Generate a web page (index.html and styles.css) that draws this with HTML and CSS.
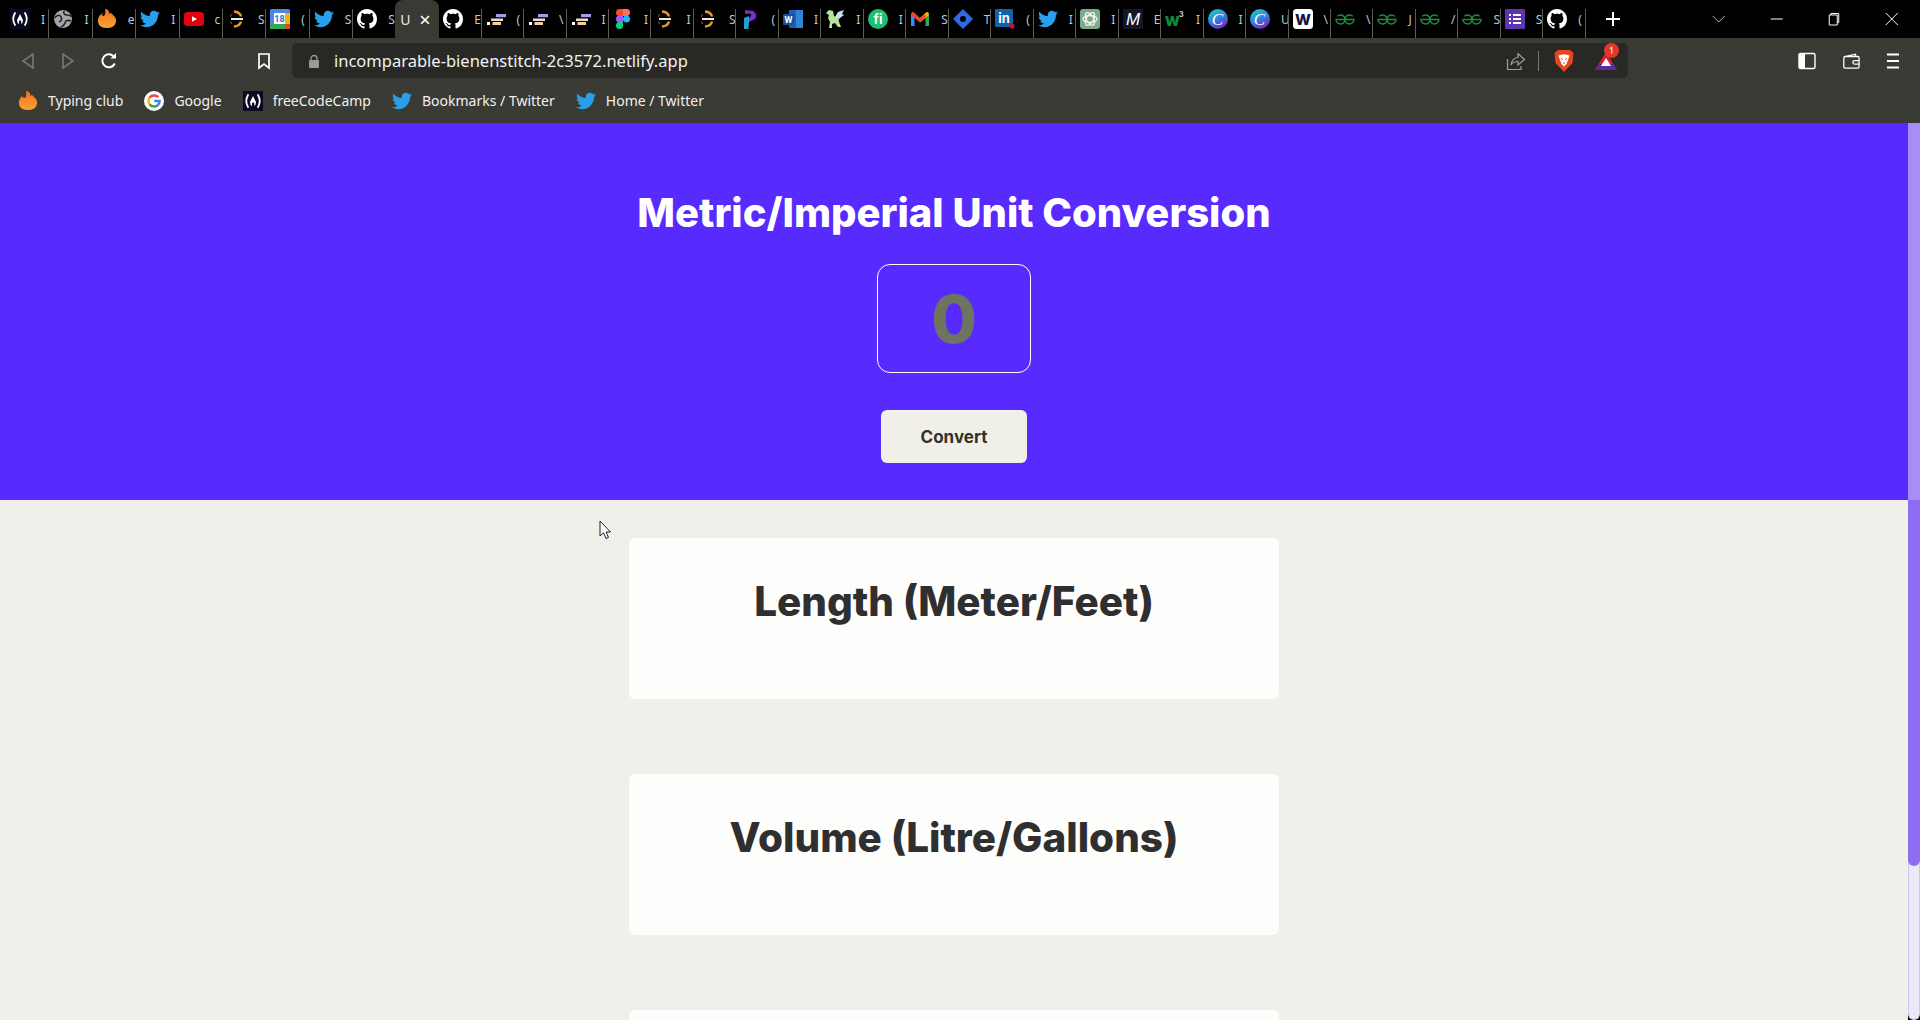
FILE: index.html
```html
<!DOCTYPE html>
<html lang="en">
<head>
    <meta charset="UTF-8">
    <meta name="viewport" content="width=device-width, initial-scale=1.0">
    <title>Metric/Imperial Unit Conversion</title>
    <link rel="stylesheet" href="styles.css">
</head>
<body>
    <svg class="defs" width="0" height="0">
        <defs>
            <linearGradient id="fireFill" x1="0" y1="0" x2="0" y2="1"><stop offset="0" stop-color="#f2701a"/><stop offset="1" stop-color="#f7a334"/></linearGradient>
            <linearGradient id="canvaFill" x1="0" y1="0" x2="0.500" y2="1"><stop offset="0" stop-color="#1fd0c8"/><stop offset="0.500" stop-color="#2f8fe0"/><stop offset="1" stop-color="#6a2fc8"/></linearGradient>
        </defs>
        <symbol id="fcc" viewBox="0 0 20 20">
            <rect width="20" height="20" fill="#0a0a23"/>
            <path d="M5 4Q1.500 10 5 16M15 4Q18.500 10 15 16" fill="none" stroke="#fff" stroke-width="1.800" stroke-linecap="round"/>
            <path d="M10 5Q12 9 13 11Q13 14 11 15Q12 12 10 11Q8.500 12 9 15Q7 14 7 11Q8 9 10 5Z" fill="#fff"/>
        </symbol>
        <symbol id="globe" viewBox="0 0 20 20">
            <circle cx="10" cy="10" r="9" fill="#a3a6a6"/>
            <path d="M1.500 9Q6 4 8 8Q10 11 6 13M11 2Q10 6 14 6Q18 6 18 8M18 12Q13 10 12 14Q11 17 8 18" fill="none" stroke="#222" stroke-width="1.600"/>
        </symbol>
        <symbol id="fire" viewBox="0 0 20 20">
            <path d="M7 7Q9 5 8 0Q12 0 12.500 5Q14 3 15 5Q20 9 19 13Q17.500 19 10 19Q2 19 1 13Q0.500 8 4 5Q5 7 7 7Z" fill="url(#fireFill)"/>
            <circle cx="5" cy="5" r="1.300" fill="#55382a"/>
        </symbol>
        <symbol id="twitter" viewBox="0 0 24 24">
            <path fill="#2a9fec" d="M23.954 4.569c-.885.389-1.830.654-2.825.775 1.014-.611 1.794-1.574 2.163-2.723-.951.555-2.005.959-3.127 1.184-.896-.959-2.173-1.559-3.591-1.559-2.717 0-4.920 2.203-4.920 4.917 0 .39.045.765.127 1.124C7.691 8.094 4.066 6.130 1.640 3.161c-.427.722-.666 1.561-.666 2.475 0 1.710.87 3.213 2.188 4.096-.807-.026-1.566-.248-2.228-.616v.061c0 2.385 1.693 4.374 3.946 4.827-.413.111-.849.171-1.296.171-.314 0-.615-.03-.916-.086.631 1.953 2.445 3.377 4.604 3.417-1.680 1.319-3.809 2.105-6.102 2.105-.39 0-.779-.023-1.170-.067 2.189 1.394 4.768 2.209 7.557 2.209 9.054 0 13.999-7.496 13.999-13.986 0-.209 0-.42-.015-.63.961-.689 1.800-1.560 2.460-2.548l-.047-.02z"/>
        </symbol>
        <symbol id="youtube" viewBox="0 0 20 20">
            <rect y="3" width="20" height="14" rx="3.500" fill="#e3000f"/>
            <path d="M8 7.200L13 10L8 12.800Z" fill="#fff"/>
        </symbol>
        <symbol id="spinner" viewBox="0 0 20 20">
            <path d="M7 2.500Q13 3 14 7.500M14 12.500Q13 17 7 17.500" fill="none" stroke="#e79a23" stroke-width="2.400"/>
            <path d="M5 5Q3.500 6 3.500 7.500M3.500 12.500Q3.500 14 5 15" fill="none" stroke="#6a4a10" stroke-width="1.400"/>
            <path d="M4 10H16" stroke="#e8e8e8" stroke-width="2"/>
        </symbol>
        <symbol id="github" viewBox="0 0 16 16">
            <path fill="#fff" d="M8 0C3.580 0 0 3.580 0 8c0 3.540 2.290 6.530 5.470 7.590.4.070.55-.17.55-.38 0-.19-.01-.82-.01-1.490-2.010.37-2.530-.49-2.690-.94-.09-.23-.48-.94-.82-1.130-.28-.15-.68-.52-.01-.53.63-.01 1.080.58 1.230.82.72 1.210 1.870.87 2.330.66.07-.52.28-.87.51-1.070-1.780-.2-3.640-.89-3.640-3.950 0-.87.31-1.590.82-2.150-.08-.2-.36-1.020.08-2.120 0 0 .67-.21 2.200.82.64-.18 1.320-.27 2-.27.68 0 1.360.09 2 .27 1.530-1.040 2.200-.82 2.200-.82.44 1.100.16 1.920.08 2.120.51.56.82 1.270.82 2.150 0 3.070-1.870 3.750-3.650 3.950.29.25.54.73.54 1.480 0 1.070-.01 1.930-.01 2.200 0 .21.15.46.55.38A8.013 8.013 0 0016 8c0-4.420-3.580-8-8-8z"/>
        </symbol>
        <symbol id="bars" viewBox="0 0 20 20">
            <rect x="10" y="5" width="10" height="3.200" fill="#a99ae6"/>
            <rect x="5" y="9.500" width="12" height="2.500" fill="#e5d9d2"/>
            <rect x="1" y="13" width="3" height="3" fill="#fff"/>
            <rect x="6.500" y="13" width="8.500" height="3" fill="#f3cfa8"/>
        </symbol>
        <symbol id="figma" viewBox="0 0 20 20">
            <path d="M3 3.500A3.500 3.500 0 016.500 0H10V7H6.500A3.500 3.500 0 013 3.500Z" fill="#f24e1e"/>
            <path d="M10 0H13.500A3.500 3.500 0 0113.500 7H10Z" fill="#ff7262"/>
            <path d="M3 10A3.500 3.500 0 016.500 6.500H10V13.500H6.500A3.500 3.500 0 013 10Z" fill="#a259ff"/>
            <circle cx="13.500" cy="10" r="3.500" fill="#1abcfe"/>
            <path d="M3 16.500A3.500 3.500 0 016.500 13H10V16.500A3.500 3.500 0 013 16.500Z" fill="#0acf83"/>
        </symbol>
        <symbol id="pfont" viewBox="0 0 20 20">
            <path d="M5 1L13 2Q18 5 15 10L9 13V9L11 7Q12 5 9 4.500L5 5Z" fill="#7a2fd8"/>
            <path d="M4 9L9 7V13L8.500 20H4Z" fill="#1f9fd8"/>
        </symbol>
        <symbol id="griffin" viewBox="0 0 20 20">
            <path d="M10 8L13 3L19 1L17 5L19 6L15 9L13 11Z" fill="#c6e2f0"/>
            <path d="M1 4L4 1L8 2L9 7L13 9L14 13L16 18H13L10 14L7 15L7 19H4L5 13L3 9L4 6Z" fill="#b5e59a"/>
        </symbol>
        <symbol id="gmail" viewBox="0 0 20 20">
            <path d="M1 5V17H4.500V8Z" fill="#4285f4"/>
            <path d="M19 5V17H15.500V8Z" fill="#34a853"/>
            <path d="M1 6Q1 2 4 3.500L10 9L10 13.500L1 6Z" fill="#ea4335"/>
            <path d="M19 6Q19 2 16 3.500L10 9L10 13.500L19 6Z" fill="#f6b704"/>
            <path d="M4.500 5L10 9.500L15.500 5V8L10 13L4.500 8Z" fill="#ea4335"/>
        </symbol>
        <symbol id="diamond" viewBox="0 0 20 20">
            <path d="M10 0.500L19.500 10L10 19.500L0.500 10Z" fill="#2d6be4" stroke="#2d6be4" stroke-width="1" stroke-linejoin="round"/>
            <circle cx="10" cy="10" r="3" fill="#000"/>
        </symbol>
        <symbol id="chatgpt" viewBox="0 0 20 20">
            <rect width="20" height="20" rx="3" fill="#79ab8e"/>
            <g fill="none" stroke="#f4f4ea" stroke-width="1.300">
                <ellipse cx="10" cy="10" rx="7" ry="3.500"/>
                <ellipse cx="10" cy="10" rx="7" ry="3.500" transform="rotate(60 10 10)"/>
                <ellipse cx="10" cy="10" rx="7" ry="3.500" transform="rotate(120 10 10)"/>
            </g>
        </symbol>
        <symbol id="gfg" viewBox="0 0 20 20">
            <path d="M10.500 10.500H19A4.500 4.500 0 1 1 17.700 7.300M9.500 10.500H1A4.500 4.500 0 1 0 2.300 7.300" fill="none" stroke="#1f8f3a" stroke-width="1.400"/>
        </symbol>
        <symbol id="forms" viewBox="0 0 20 20">
            <rect width="20" height="20" rx="1" fill="#5e35b1"/>
            <path d="M8 6H16M8 10H16M8 14H16M4 6H6M4 10H6M4 14H6" stroke="#fff" stroke-width="2"/>
        </symbol>
        <symbol id="google" viewBox="0 0 20 20">
            <circle cx="10" cy="10" r="10" fill="#fff"/>
            <g fill="none" stroke-width="2.500">
                <path d="M14.200 6.200A5.600 5.600 0 005.500 6.800" stroke="#ea4335"/>
                <path d="M5.500 6.800A5.600 5.600 0 005.500 13.200" stroke="#fbbc05"/>
                <path d="M5.500 13.200A5.600 5.600 0 0014.300 13.600" stroke="#34a853"/>
                <path d="M14.300 13.600A5.600 5.600 0 0015.600 10H10.200" stroke="#4285f4"/>
            </g>
        </symbol>
    </svg>

    <div class="tabstrip">
        <div class="tabs">
            <div class="tab"><svg class="favicon"><use href="#fcc"/></svg><span>I</span></div>
            <div class="tab"><svg class="favicon"><use href="#globe"/></svg><span>I</span></div>
            <div class="tab"><svg class="favicon"><use href="#fire"/></svg><span>e</span></div>
            <div class="tab"><svg class="favicon"><use href="#twitter"/></svg><span>I</span></div>
            <div class="tab"><svg class="favicon"><use href="#youtube"/></svg><span>c</span></div>
            <div class="tab"><svg class="favicon"><use href="#spinner"/></svg><span>S</span></div>
            <div class="tab">
                <svg class="favicon" viewBox="0 0 20 20">
                    <rect width="20" height="20" rx="1.500" fill="#4a86e8"/>
                    <rect x="15" y="4" width="5" height="12" fill="#f4b400"/>
                    <rect y="15" width="20" height="5" fill="#34a853"/>
                    <rect x="15" y="15" width="5" height="5" fill="#ea4335"/>
                    <rect x="4" y="4" width="11" height="11" fill="#fff"/>
                    <text x="9.500" y="13" text-anchor="middle" font-family="Roboto, sans-serif" font-size="9" font-weight="700" fill="#2f6fdc">18</text>
                </svg>
                <span>(</span>
            </div>
            <div class="tab"><svg class="favicon"><use href="#twitter"/></svg><span>S</span></div>
            <div class="tab no-sep"><svg class="favicon"><use href="#github"/></svg><span>S</span></div>
            <div class="tab active"><span>U</span><b>×</b></div>
            <div class="tab"><svg class="favicon"><use href="#github"/></svg><span>E</span></div>
            <div class="tab"><svg class="favicon"><use href="#bars"/></svg><span>(</span></div>
            <div class="tab"><svg class="favicon"><use href="#bars"/></svg><span>\</span></div>
            <div class="tab"><svg class="favicon"><use href="#bars"/></svg><span>I</span></div>
            <div class="tab"><svg class="favicon"><use href="#figma"/></svg><span>I</span></div>
            <div class="tab"><svg class="favicon"><use href="#spinner"/></svg><span>I</span></div>
            <div class="tab"><svg class="favicon"><use href="#spinner"/></svg><span>S</span></div>
            <div class="tab"><svg class="favicon"><use href="#pfont"/></svg><span>(</span></div>
            <div class="tab">
                <svg class="favicon" viewBox="0 0 20 20">
                    <rect x="6" y="1" width="14" height="18" rx="1" fill="#1d5fb8"/>
                    <rect x="13" y="1" width="7" height="18" fill="#2f86d8"/>
                    <rect y="5" width="11" height="11" rx="1" fill="#1a4f9c"/>
                    <text x="5.500" y="14" text-anchor="middle" font-family="Roboto, sans-serif" font-size="9" font-weight="700" fill="#fff">W</text>
                </svg>
                <span>I</span>
            </div>
            <div class="tab"><svg class="favicon"><use href="#griffin"/></svg><span>I</span></div>
            <div class="tab">
                <svg class="favicon" viewBox="0 0 20 20">
                    <circle cx="10" cy="10" r="10" fill="#1dbf73"/>
                    <text x="10" y="15" text-anchor="middle" font-family="Inter, sans-serif" font-size="13" font-weight="700" fill="#fff">fi</text>
                </svg>
                <span>I</span>
            </div>
            <div class="tab"><svg class="favicon"><use href="#gmail"/></svg><span>S</span></div>
            <div class="tab"><svg class="favicon"><use href="#diamond"/></svg><span>T</span></div>
            <div class="tab">
                <svg class="favicon" viewBox="0 0 20 20">
                    <rect width="18" height="18" rx="1" fill="#1262a8"/>
                    <text x="9" y="14" text-anchor="middle" font-family="Inter, sans-serif" font-size="13" font-weight="700" fill="#fff">in</text>
                    <circle cx="17" cy="17" r="2.600" fill="#c8102e"/>
                </svg>
                <span>(</span>
            </div>
            <div class="tab"><svg class="favicon"><use href="#twitter"/></svg><span>I</span></div>
            <div class="tab"><svg class="favicon"><use href="#chatgpt"/></svg><span>I</span></div>
            <div class="tab">
                <svg class="favicon" viewBox="0 0 20 20">
                    <rect width="20" height="20" fill="#15152a"/>
                    <text x="10" y="16" text-anchor="middle" font-family="Liberation Sans, sans-serif" font-style="italic" font-size="17" fill="#fff">M</text>
                </svg>
                <span>E</span>
            </div>
            <div class="tab">
                <svg class="favicon" viewBox="0 0 20 20">
                    <text x="0" y="17" font-family="Inter, sans-serif" font-size="17" font-weight="800" fill="#118a3c">w</text>
                    <text x="14" y="8" font-family="Inter, sans-serif" font-size="7" font-weight="700" fill="#d8d8d8">3</text>
                </svg>
                <span>I</span>
            </div>
            <div class="tab">
                <svg class="favicon" viewBox="0 0 20 20">
                    <circle cx="10" cy="10" r="10" fill="url(#canvaFill)"/>
                    <text x="9.500" y="15.500" text-anchor="middle" font-family="Liberation Serif, serif" font-style="italic" font-size="17" fill="#fff">C</text>
                </svg>
                <span>I</span>
            </div>
            <div class="tab">
                <svg class="favicon" viewBox="0 0 20 20">
                    <circle cx="10" cy="10" r="10" fill="url(#canvaFill)"/>
                    <text x="9.500" y="15.500" text-anchor="middle" font-family="Liberation Serif, serif" font-style="italic" font-size="17" fill="#fff">C</text>
                </svg>
                <span>U</span>
            </div>
            <div class="tab">
                <svg class="favicon" viewBox="0 0 20 20">
                    <rect width="20" height="20" rx="3.500" fill="#fff"/>
                    <text x="10" y="15.500" text-anchor="middle" font-family="Inter, sans-serif" font-size="15" font-weight="800" fill="#14143c">W</text>
                </svg>
                <span>\</span>
            </div>
            <div class="tab"><svg class="favicon"><use href="#gfg"/></svg><span>\</span></div>
            <div class="tab"><svg class="favicon"><use href="#gfg"/></svg><span>J</span></div>
            <div class="tab"><svg class="favicon"><use href="#gfg"/></svg><span>/</span></div>
            <div class="tab"><svg class="favicon"><use href="#gfg"/></svg><span>S</span></div>
            <div class="tab"><svg class="favicon"><use href="#forms"/></svg><span>S</span></div>
            <div class="tab"><svg class="favicon"><use href="#github"/></svg><span>(</span></div>
        </div>
        <svg class="newtab" viewBox="0 0 16 16"><path d="M8 1V15M1 8H15" stroke="#fff" stroke-width="2"/></svg>
        <div class="winctl">
            <svg viewBox="0 0 14 14"><path d="M1 4L7 10L13 4" fill="none" stroke="#bbb"/></svg>
            <svg viewBox="0 0 14 14"><path d="M1 7H13" stroke="#fff"/></svg>
            <svg viewBox="0 0 14 14"><path d="M4 3V1.500H12V10.500H10.500M2.500 3H10.500V13H2.500Z" fill="none" stroke="#fff"/></svg>
            <svg viewBox="0 0 14 14"><path d="M1 1L13 13M13 1L1 13" stroke="#fff"/></svg>
        </div>
    </div>

    <div class="chrome">
        <div class="toolbar">
            <div class="nav">
                <svg viewBox="0 0 14 18"><path d="M12 2V16L2 9Z" fill="none" stroke="#777" stroke-width="1.600"/></svg>
                <svg viewBox="0 0 14 18"><path d="M2 2V16L12 9Z" fill="none" stroke="#777" stroke-width="1.600"/></svg>
                <svg viewBox="0 0 18 18"><path d="M14.800 11.500A6.500 6.500 0 1 1 13.500 4.200" fill="none" stroke="#fff" stroke-width="2"/><path d="M10.500 6.500H16V1Z" fill="#fff"/></svg>
            </div>
            <svg class="bookmark" viewBox="0 0 14 18"><path d="M2 2H12V16L7 12L2 16Z" fill="none" stroke="#fff" stroke-width="1.700"/></svg>
            <div class="urlbar">
                <svg class="lock" viewBox="0 0 12 14"><path d="M3 6V4.500A3 3 0 019 4.500V6" fill="none" stroke="#9a9a9a" stroke-width="1.300"/><rect x="1" y="6" width="10" height="8" rx="1" fill="#9a9a9a"/></svg>
                <span class="url">incomparable-bienenstitch-2c3572.netlify.app</span>
                <svg class="share" viewBox="0 0 20 20"><path d="M1.500 8V18.500H15V15M5 14Q6 7 12 6.500V2.500L18.500 8.500L12 14V10.500Q7 10.500 5 14Z" fill="none" stroke="#a0a0a0" stroke-width="1.200"/></svg>
                <i class="sep"></i>
                <svg class="brave" viewBox="0 0 20 24">
                    <path d="M4 1H16L19.500 4L18.500 14L10 23L1.500 14L0.500 4Z" fill="#e8471c"/>
                    <path d="M4.500 6.500L8 5.500H12L15.500 6.500L14 11L12.500 15L10 17.500L7.500 15L6 11Z" fill="#fff"/>
                    <path d="M7 9.500L9 10.500M13 9.500L11 10.500M9 14H11" stroke="#e8471c" stroke-width="1"/>
                </svg>
                <div class="rewards">
                    <svg viewBox="0 0 24 20"><path d="M12 1L23 19H1Z" fill="#d9212e"/><path d="M1 19L5 13H19L23 19Z" fill="#5f2a9c"/><path d="M12 7L17 15H7Z" fill="#fff"/></svg>
                    <em>1</em>
                </div>
            </div>
            <div class="tools">
                <svg viewBox="0 0 18 18"><rect x="1" y="1.500" width="16" height="15" rx="1.500" fill="none" stroke="#fff" stroke-width="1.400"/><rect x="1" y="1.500" width="6" height="15" fill="#fff"/></svg>
                <svg viewBox="0 0 20 18"><path d="M3 4L15 1.500V4M2 5.500Q2 4 3.500 4H17.500Q19 4 19 5.500V15.500Q19 17 17.500 17H3.500Q2 17 2 15.500ZM19 8.500H14A2 2 0 0014 12.500H19" fill="none" stroke="#fff" stroke-width="1.400"/></svg>
                <svg viewBox="0 0 14 18"><path d="M1 2.500H13M1 9H13M1 15.500H13" stroke="#fff" stroke-width="1.800"/></svg>
            </div>
        </div>
        <div class="bookmarks">
            <div class="mark"><svg class="favicon"><use href="#fire"/></svg><span>Typing club</span></div>
            <div class="mark"><svg class="favicon"><use href="#google"/></svg><span>Google</span></div>
            <div class="mark"><svg class="favicon"><use href="#fcc"/></svg><span>freeCodeCamp</span></div>
            <div class="mark"><svg class="favicon"><use href="#twitter"/></svg><span>Bookmarks / Twitter</span></div>
            <div class="mark"><svg class="favicon"><use href="#twitter"/></svg><span>Home / Twitter</span></div>
        </div>
    </div>

    <div class="viewport">
        <div class="page">
            <header class="hero">
                <h1>Metric/Imperial Unit Conversion</h1>
                <input class="amount" type="text" value="0">
                <button class="convert">Convert</button>
            </header>
            <main class="results">
                <section class="card"><h2>Length (Meter/Feet)</h2></section>
                <section class="card"><h2>Volume (Litre/Gallons)</h2></section>
                <section class="card"></section>
            </main>
        </div>
        <div class="scrollbar"><div class="thumb"></div></div>
    </div>

    <svg class="cursor" viewBox="0 0 12 20"><path d="M1 1V16L4.500 12.800L7 18.500L9.500 17.500L7 12H11.500Z" fill="#fff" stroke="#1c1c30" stroke-width="1"/></svg>
</body>
</html>
```

FILE: styles.css
```css
* {
    margin: 0;
    padding: 0;
    box-sizing: border-box;
}

body {
    width: 1920px;
    height: 1020px;
    overflow: hidden;
    background: #000;
    font-family: 'Inter', sans-serif;
}

.defs {
    position: absolute;
}

.favicon {
    width: 20px;
    height: 20px;
    flex-shrink: 0;
}

/* tab strip */
.tabstrip {
    height: 38px;
    background: #000;
    display: flex;
    align-items: stretch;
    padding-left: 6px;
}

.tabs {
    display: flex;
}

.tab {
    width: 42.48px;
    display: flex;
    align-items: center;
    gap: 11px;
    padding-left: 4px;
    margin-top: 9px;
    padding-bottom: 9px;
    overflow: hidden;
    border-right: 1px solid #5c5c50;
    color: #b9c9d6;
    font: 12px 'Noto Sans', sans-serif;
}

.tab:nth-child(-n+8) {
    width: 43.4px;
}

.tab:nth-child(9) {
    width: 42px;
}

.tab.no-sep {
    border-right: 0;
}

.tab.active {
    width: 44px;
    margin-top: 0;
    padding: 0 0 0 5px;
    gap: 9px;
    background: #3a3a35;
    border-right: 0;
    border-radius: 8px 8px 0 0;
    color: #e8e8e8;
    font-size: 14px;
}

.tab.active b {
    font-size: 20px;
    font-weight: 400;
    color: #fff;
}

.newtab {
    width: 16px;
    height: 16px;
    margin: 11px 0 0 19px;
}

.winctl {
    margin-left: auto;
    display: flex;
    align-items: center;
}

.winctl svg {
    width: 57.5px;
    height: 14px;
}

/* toolbar and bookmarks */
.chrome {
    height: 85px;
    background: repeating-conic-gradient(#34342e 0 25%, #41413c 0 50%) 0 0 / 2px 2px;
    color: #fff;
}

.toolbar {
    height: 42px;
    display: flex;
    align-items: center;
    padding-top: 3px;
}

.nav {
    display: flex;
    align-items: center;
}

.nav svg {
    width: 14px;
    height: 18px;
}

.nav svg:first-child {
    margin-left: 21px;
}

.nav svg:nth-child(2) {
    margin-left: 26px;
}

.nav svg:last-child {
    width: 18px;
    margin-left: 25px;
}

.bookmark {
    width: 14px;
    height: 18px;
    margin-left: 139px;
}

.urlbar {
    width: 1336px;
    height: 35px;
    margin-left: 21px;
    display: flex;
    align-items: center;
    padding-left: 16px;
    border-radius: 5px;
    background: #282824;
}

.lock {
    width: 12px;
    height: 14px;
}

.url {
    margin-left: 14px;
    font: 16.5px 'Noto Sans', sans-serif;
    color: #f2f2f2;
    white-space: nowrap;
}

.share {
    width: 20px;
    height: 20px;
    margin-left: auto;
}

.sep {
    width: 1px;
    height: 20px;
    margin-left: 12px;
    background: #777;
}

.brave {
    width: 20px;
    height: 24px;
    margin-left: 15px;
}

.rewards {
    position: relative;
    width: 24px;
    height: 20px;
    margin: 0 10px 0 20px;
}

.rewards svg {
    width: 24px;
    height: 20px;
}

.rewards em {
    position: absolute;
    left: 10px;
    top: -8px;
    width: 15px;
    height: 15px;
    border-radius: 50%;
    background: #e0392b;
    color: #fff;
    font: 9px/15px 'Noto Sans', sans-serif;
    text-align: center;
}

.tools {
    display: flex;
    align-items: center;
}

.tools svg {
    width: 18px;
    height: 18px;
    margin-left: 26px;
}

.tools svg:first-child {
    margin-left: 170px;
}

.tools svg:last-child {
    width: 14px;
}

.bookmarks {
    height: 43px;
    display: flex;
    align-items: center;
    padding-left: 18px;
    gap: 21px;
    padding-bottom: 2px;
}

.mark {
    display: flex;
    align-items: center;
    gap: 10px;
    font: 14px 'Noto Sans', sans-serif;
    color: #f0f0f0;
}

/* page */
.viewport {
    height: 897px;
    display: flex;
}

.page {
    flex: 1;
    overflow: hidden;
    background: repeating-conic-gradient(#f6f6f0 0 25%, #e9e9ec 0 50%) 0 0 / 2px 2px;
}

.hero {
    height: 377px;
    padding-top: 66px;
    display: flex;
    flex-direction: column;
    align-items: center;
    background: repeating-conic-gradient(#5124f8 0 25%, #6134e8 0 50%) 0 0 / 2px 2px;
}

.hero h1 {
    font-size: 40px;
    font-weight: 800;
    line-height: 48px;
    color: #fff;
}

.amount {
    width: 154px;
    height: 109px;
    margin-top: 27px;
    border: 1px solid #fff;
    border-radius: 13px;
    outline: 0;
    background: transparent;
    font-family: inherit;
    font-size: 66px;
    font-weight: 800;
    text-align: center;
    color: #6d7560;
}

.convert {
    width: 146px;
    height: 53px;
    margin-top: 37px;
    border: 0;
    border-radius: 6px;
    background: #f0f0e8;
    font-family: inherit;
    font-size: 17px;
    font-weight: 700;
    color: #353028;
}

.results {
    padding-top: 38px;
    display: flex;
    flex-direction: column;
    align-items: center;
    gap: 75px;
}

.card {
    width: 650px;
    height: 161px;
    padding-top: 40px;
    border-radius: 6px;
    background: #fdfdfb;
    text-align: center;
}

.card h2 {
    font-size: 40.4px;
    font-weight: 800;
    line-height: 48px;
    color: #2f2f2f;
}

.scrollbar {
    width: 12px;
    border: 1px solid #cfc4f2;
    border-top: 0;
    border-radius: 0 0 6px 6px;
    background: #ece9f6;
}

.thumb {
    height: 743px;
    margin: 0 -1px;
    border-radius: 0 0 6px 6px;
    background: linear-gradient(#a78ef6 377px, #8f6df0 377px);
}

.cursor {
    position: absolute;
    left: 599px;
    top: 520px;
    width: 12px;
    height: 20px;
}
```
